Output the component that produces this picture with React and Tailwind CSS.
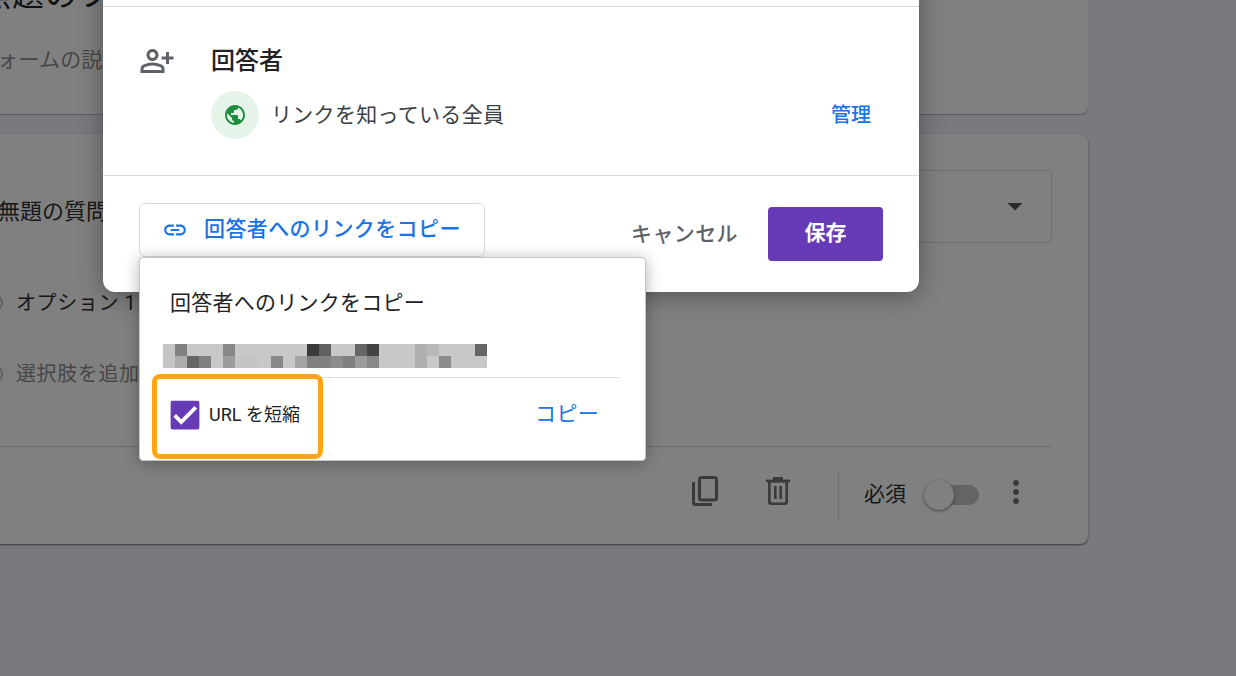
import React from "react";
import {
  MdOutlinePersonAddAlt,
  MdPublic,
  MdLink,
  MdMoreVert,
  MdArrowDropDown,
  MdCheck,
} from "react-icons/md";

const ROW1 = ["#c4c4c4","#808080","#c8c8c8","#c8c8c8","#c8c8c8","#888888","#c8c8c8","#c8c8c8","#c8c8c8","#c8c8c8","#c8c8c8","#c8c8c8","#3a3a3a","#606060","#c8c8c8","#c8c8c8","#666666","#444444","#c8c8c8","#c8c8c8","#c8c8c8","#b0b0b0","#b8b8b8","#c8c8c8","#c8c8c8","#c8c8c8","#666666"];
const ROW2 = ["#c4c4c4","#acacac","#666666","#808080","#c8c8c8","#9c9c9c","#c4c4c4","#c4c4c4","#c8c8c8","#888888","#c8c8c8","#a4a4a4","#808080","#808080","#8c8c8c","#808080","#9c9c9c","#888888","#c8c8c8","#c8c8c8","#c8c8c8","#b0b0b0","#c8c8c8","#8c8c8c","#c8c8c8","#c8c8c8","#c8c8c8"];

const font = "font-['Roboto','Noto_Sans_CJK_JP',sans-serif]";

function PixelRow({ colors }) {
  return (
    <div className="flex">
      {colors.map((c, i) => (
        <div key={i} className="w-3 h-3" style={{ backgroundColor: c }} />
      ))}
    </div>
  );
}

function CopyIcon() {
  return (
    <svg width="26" height="30" viewBox="0 0 26 30" fill="none" stroke="currentColor" strokeWidth="3" className="-mt-[6px] mr-[48px] shrink-0">
      <path d="M1.5 6v21a1.5 1.5 0 0 0 1.5 1.5h17" />
      <rect x="7.5" y="1.5" width="17" height="22.5" rx="2" />
    </svg>
  );
}

function TrashIcon() {
  return (
    <svg width="24" height="28" viewBox="0 0 24 28" fill="currentColor" className="-mt-[6px] mr-[48px] shrink-0">
      <rect x="7" y="0" width="10" height="3" />
      <rect x="0" y="2.6" width="24" height="2.6" />
      <path d="M2 4h20v21a3 3 0 0 1-3 3H5a3 3 0 0 1-3-3V4zm2.6 1.5V24a1.4 1.4 0 0 0 1.4 1.4h12a1.4 1.4 0 0 0 1.4-1.4V5.5H4.600z" fillRule="evenodd" />
      <rect x="8" y="9" width="2.6" height="13" />
      <rect x="13.400" y="9" width="2.6" height="13" />
    </svg>
  );
}

function Background() {
  return (
    <div className="flex flex-col gap-5 w-[1133px] -ml-[45px] -mt-[60px]">
      <div className="h-[174px] bg-[#808080] rounded-lg shadow-[0_1px_1px_rgba(0,0,0,0.25)] pl-6 overflow-hidden">
        <div className="h-[90px] pt-[33px] text-[32px] leading-[44px] text-[#111111] tracking-[1px] whitespace-nowrap">無題のフォーム</div>
        <div className="mt-[15px] -ml-[3px] text-[21px] leading-[30px] text-[#474747] tracking-[0.2px] whitespace-nowrap">フォームの説明</div>
      </div>
      <div className="h-[410px] bg-[#808080] rounded-lg shadow-[0_1px_2px_rgba(0,0,0,0.55)] pl-[30px] pr-9 flex flex-col">
        <div className="flex justify-between h-[144px] pt-[36px]">
          <div className="pt-[27px] ml-[13px] text-[22px] leading-[30px] text-[#171717] whitespace-nowrap">無題の質問</div>
          <div className="w-[400px] h-[73px] border border-[#6f6f6f] rounded flex items-center justify-end pr-[18px] text-[#2a2a2a]">
            <MdArrowDropDown size={36} className="-mt-[1px]" />
          </div>
        </div>
        <div className="flex items-center h-[34px] mt-[8px]">
          <div className="w-[18px] h-[18px] rounded-full border-2 border-[#5f5f5f] shrink-0" />
          <div className="text-[20px] leading-[30px] tracking-[0.6px] text-[#171717] whitespace-nowrap ml-[13px]">オプション 1</div>
        </div>
        <div className="flex items-center h-[34px] mt-[37px]">
          <div className="w-[18px] h-[18px] rounded-full border-2 border-[#5f5f5f] shrink-0" />
          <div className="text-[20px] leading-[30px] tracking-[0.6px] text-[#474747] whitespace-nowrap ml-[13px]">選択肢を追加</div>
        </div>
        <div className="h-px bg-[#6e6e6e] mt-[55px]" />
        <div className="flex items-center justify-end h-[97px] pr-[18px] pb-[4px] text-[#3a3a3d]">
          <CopyIcon />
          <TrashIcon />
          <div className="w-px h-[48px] bg-[#6e6e6e] mt-[4px] mr-[25px]" />
          <div className="text-[21px] leading-[28px] text-[#171717] mr-[18px]">必須</div>
          <div className="relative w-[55px] h-[20px] mr-[19px] mt-[2px]">
            <div className="absolute left-[7px] right-0 top-0 h-5 rounded-full bg-[#646464]" />
            <div className="absolute left-0 -top-[5px] w-[30px] h-[30px] rounded-full bg-[#808080] shadow-[0_1px_3px_rgba(0,0,0,0.5)]" />
          </div>
          <MdMoreVert size={36} className="-mt-[4px]" />
        </div>
      </div>
    </div>
  );
}

function Popup() {
  return (
    <div className="absolute left-[139px] top-[257px] w-[507px] h-[204px] bg-white rounded border border-[#c4c4c4] shadow-[0_2px_16px_rgba(0,0,0,0.3)] px-[23px]">
      <div className="pl-[7px] pt-[30px] text-[21px] leading-[30px] tracking-[0.25px] text-[#202124] whitespace-nowrap">回答者へのリンクをコピー</div>
      <div className="mt-[26px]">
        <PixelRow colors={ROW1} />
        <PixelRow colors={ROW2} />
      </div>
      <div className="h-px bg-[#e0e0e0] mt-[9px] w-[457px]" />
      <div className="flex items-center justify-between pt-[22px] pl-[7px] pr-[23px]">
        <div className="flex items-center">
          <div className="w-[30px] h-[30px] rounded bg-[#673ab7] flex items-center justify-center text-white">
            <MdCheck size={32} stroke="currentColor" strokeWidth={1} />
          </div>
          <div className="ml-[9px] -mt-[1px] text-[18px] leading-[24px] text-[#202124] whitespace-nowrap">URL を短縮</div>
        </div>
        <div className="text-[21px] leading-[28px] tracking-[0.3px] text-[#1a73e8] -mt-[3px]">コピー</div>
      </div>
      <div className="absolute left-[12px] top-[116px] w-[171px] h-[85px] border-[5px] border-[#ffa515] rounded-lg" />
    </div>
  );
}

function Dialog() {
  return (
    <div className="absolute left-[103px] -top-[39px] w-[816px] h-[331px] bg-white rounded-b-xl shadow-[0_4px_24px_rgba(0,0,0,0.35)] flex flex-col">
      <div className="h-[46px] border-b border-[#dadce0]" />
      <div className="h-[169px] border-b border-[#dadce0] pl-9 pr-12 flex">
        <div className="w-[72px] pt-[36px] text-[#5f6368] shrink-0">
          <MdOutlinePersonAddAlt size={36} />
        </div>
        <div className="flex-1 pt-[39px]">
          <div className="text-[24px] leading-[30px] font-medium text-[#202124]">回答者</div>
          <div className="flex items-center mt-[15px]">
            <div className="w-12 h-12 rounded-full bg-[#e6f4ea] flex items-center justify-center text-[#1e8e3e]">
              <MdPublic size={24} />
            </div>
            <div className="ml-[12px] text-[21px] leading-[30px] tracking-[0.3px] text-[#3c4043] whitespace-nowrap">リンクを知っている全員</div>
            <div className="ml-auto text-[20px] leading-[28px] font-medium text-[#1a73e8] -mt-[1px]">管理</div>
          </div>
        </div>
      </div>
      <div className="flex items-start justify-between pl-9 pr-9 pt-[27px]">
        <div className="w-[346px] h-[54px] border border-[#dadce0] rounded-md flex items-center pl-[22px] text-[#1a73e8]">
          <MdLink size={26} />
          <div className="ml-[16px] text-[21px] leading-[30px] tracking-[0.4px] font-medium whitespace-nowrap -mt-[2px]">回答者へのリンクをコピー</div>
        </div>
        <div className="flex items-center mt-[4px]">
          <div className="text-[21px] leading-[30px] tracking-[0.4px] font-medium text-[#5f6368] -mt-[1px] mr-[30px]">キャンセル</div>
          <div className="w-[115px] h-[54px] rounded bg-[#673ab7] text-white flex items-center justify-center text-[21px] leading-[30px] font-bold pb-[2px]">保存</div>
        </div>
      </div>
    </div>
  );
}

export default function App() {
  return (
    <div className={`relative w-[1236px] h-[676px] overflow-hidden bg-[#7b7880] ${font}`}>
      <Background />
      <Dialog />
      <Popup />
    </div>
  );
}
